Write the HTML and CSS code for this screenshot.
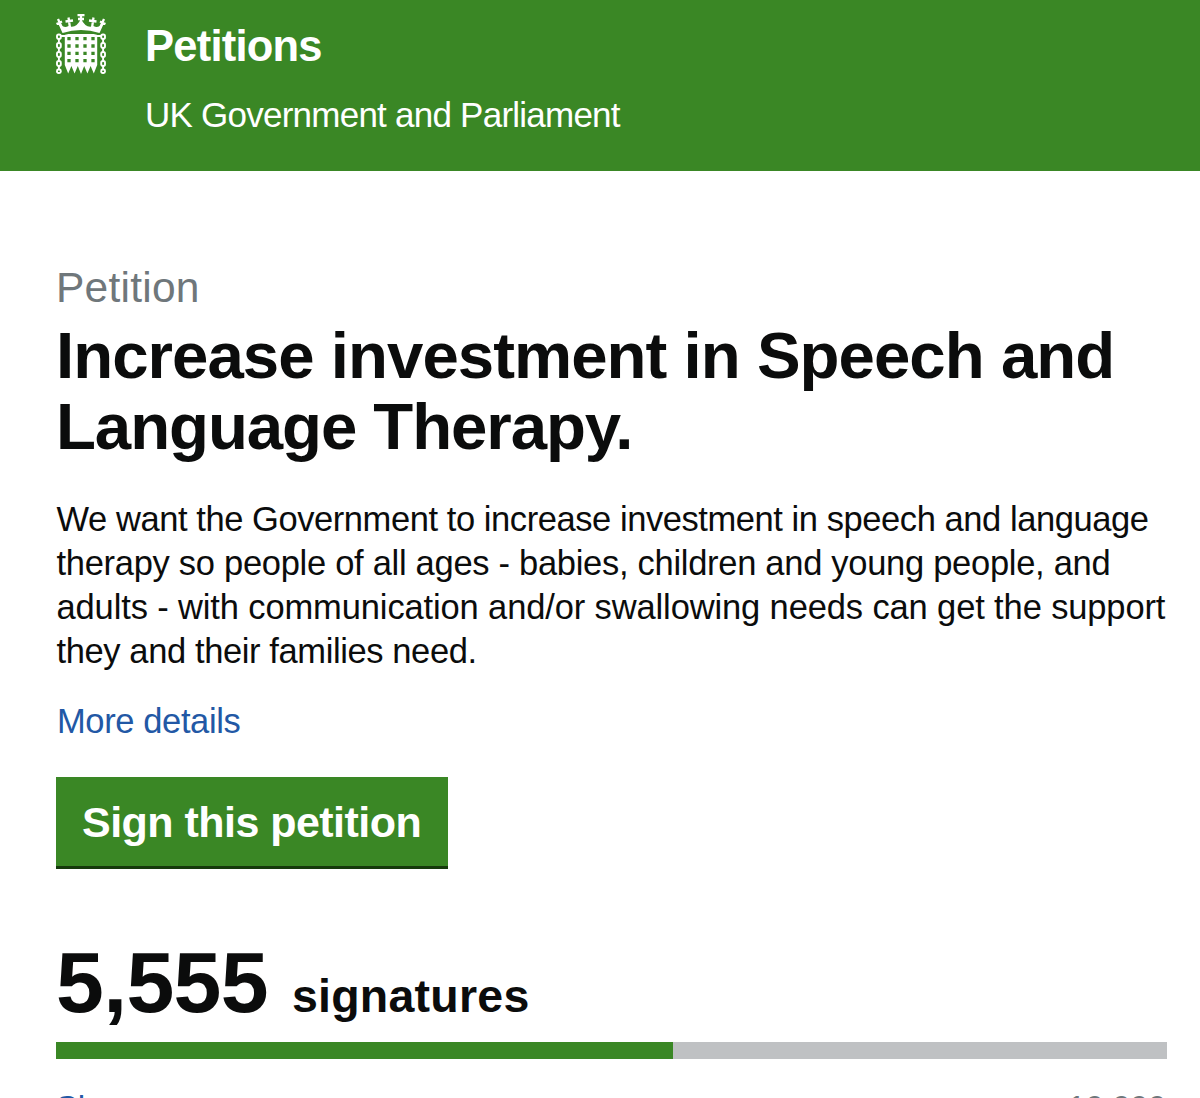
FILE: index.html
```html
<!DOCTYPE html>
<html lang="en">
<head>
<meta charset="utf-8">
<title>Increase investment in Speech and Language Therapy. - Petitions</title>
<link rel="stylesheet" href="styles.css">
</head>
<body>
<header class="header">
  <svg class="logo" viewBox="0 0 50 60" fill="none" stroke="#fff" aria-hidden="true">
    <path d="M8.800 20H41.200V51L37.800 59.500L34.600 52L31.400 59.500L28.200 52L25 60L21.800 52L18.600 59.500L15.400 52L12.200 59.500L8.800 51Z" fill="#fff" stroke="none"/>
    <path d="M13 23V49M21 23V49M29 23V49M37 23V49" stroke="#3a8725" stroke-width="3.300" stroke-dasharray="3.300 4.050"/>
    <path d="M6.500 19Q25 13 43.500 19L48.500 8Q43 15 37.500 12Q30 15 25 5Q20 15 12.500 12Q7 15 1.500 8Z" fill="#fff" stroke="none"/>
    <path d="M21.500 1.200H28.500M25 0V10M22 5H28M12.500 3.500L14 14M9.500 7.500L17 6.500M37.500 3.500L36 14M40.500 7.500L33 6.500M2 5L7 16M.5 10L6 7.500M48 5L43 16M49.500 10L44 7.500" stroke-width="2.300"/>
    <path d="M8 20.500Q25 15.500 42 20.500" stroke="#3a8725" stroke-width="1.100"/>
    <g stroke-width="1.900"><g id="chain"><rect x="1" y="20.500" width="3.800" height="4.500" rx="1.700"/><rect x="1" y="29" width="3.800" height="5" rx="1.700"/><rect x="1" y="38" width="3.800" height="5" rx="1.700"/><rect x="1" y="47" width="3.800" height="5" rx="1.700"/><rect x="1" y="55.500" width="3.800" height="3.500" rx="1.500"/><path d="M2.900 25V29M2.900 34V38M2.900 43V47M2.900 52V55.500"/></g><use href="#chain" x="44.200"/><path d="M5 22H9M41 22H45"/></g>
  </svg>
  <div class="brand">
    <div class="site-name">Petitions</div>
    <div class="site-owner">UK Government and Parliament</div>
  </div>
</header>
<main class="main">
  <div class="kicker">Petition</div>
  <h1 class="title">Increase investment in Speech and<br><span class="title-end">Language Therapy.</span></h1>
  <p class="summary"><span class="line-a">We want the Government to increase investment in speech and language</span><br><span class="line-b">therapy so people of all ages - babies, children and young people, and</span><br><span class="line-c">adults - with communication and/or swallowing needs can get the support</span><br><span class="line-d">they and their families need.</span></p>
  <a class="link" href="#">More details</a>
  <a class="button" href="#">Sign this petition</a>
  <div class="count"><span class="number">5,555</span><span class="unit">signatures</span></div>
  <div class="progress"><div class="progress-value" style="width:55.55%"></div></div>
  <div class="meta"><a class="link" href="#">Sh</a><span class="goal">10,000</span></div>
</main>
</body>
</html>
```
FILE: styles.css
```css
* { box-sizing: border-box; }
body {
  margin: 0;
  height: 1098px;
  overflow: hidden;
  background: #fff;
  color: #0b0c0c;
  font-family: "Liberation Sans", Arial, sans-serif;
}
.header {
  display: flex;
  align-items: flex-start;
  gap: 39px;
  height: 171px;
  padding: 14px 56px 0;
  background: #3a8725;
  color: #fff;
}
.logo { width: 50px; height: 60px; flex: none; }
.brand { padding-top: 7px; }
.site-name {
  font-size: 43.5px;
  font-weight: bold;
  line-height: 50px;
  letter-spacing: -0.77px;
}
.site-owner {
  margin-top: 22px;
  font-size: 35px;
  line-height: 44px;
  letter-spacing: -0.76px;
  white-space: nowrap;
}
.main {
  display: flex;
  flex-direction: column;
  align-items: flex-start;
  padding: 92px 33px 0 56px;
}
.kicker {
  color: #6f777b;
  font-size: 42.5px;
  line-height: 50px;
  letter-spacing: 0.25px;
}
.title {
  margin: 8px 0 34.8px;
  font-size: 65.4px;
  line-height: 70.6px;
  letter-spacing: -0.97px;
  white-space: nowrap;
}
.title-end { letter-spacing: -1.08px; }
.summary {
  margin: 0;
  padding-left: 0.5px;
  font-size: 34.5px;
  line-height: 44px;
  white-space: nowrap;
}
.line-a { letter-spacing: -0.43px; }
.line-b { letter-spacing: -0.289px; }
.line-c { letter-spacing: -0.13px; }
.line-d { letter-spacing: -0.39px; }
.link {
  margin: 26px 0 0 1px;
  color: #2258a5;
  font-size: 34.5px;
  line-height: 44px;
  letter-spacing: -0.38px;
  text-decoration: none;
}
.button {
  width: 392px;
  height: 91.5px;
  margin-top: 34.5px;
  padding: 20px 26px 0;
  border-bottom: 3px solid #163a0c;
  background: #3a8725;
  color: #fff;
  font-size: 43px;
  font-weight: bold;
  line-height: 50px;
  letter-spacing: -0.53px;
  text-decoration: none;
  white-space: nowrap;
}
.count {
  display: flex;
  align-items: baseline;
  gap: 24px;
  height: 90px;
  margin-top: 67.8px;
  font-weight: bold;
  line-height: 90px;
}
.number { font-size: 86px; letter-spacing: -0.67px; }
.unit { font-size: 46.5px; letter-spacing: 0.25px; }
.progress {
  width: 1110.500px;
  height: 17px;
  margin-top: 15.5px;
  background: #bfc1c3;
}
.progress-value { height: 100%; background: #3a8725; }
.meta {
  display: flex;
  justify-content: space-between;
  width: 1110px;
  padding-top: 26.5px;
  font-size: 33px;
  line-height: 44px;
}
.meta .link { margin: 0; font-size: 33px; }
.goal { color: #6f777b; letter-spacing: -0.4px; }
```
